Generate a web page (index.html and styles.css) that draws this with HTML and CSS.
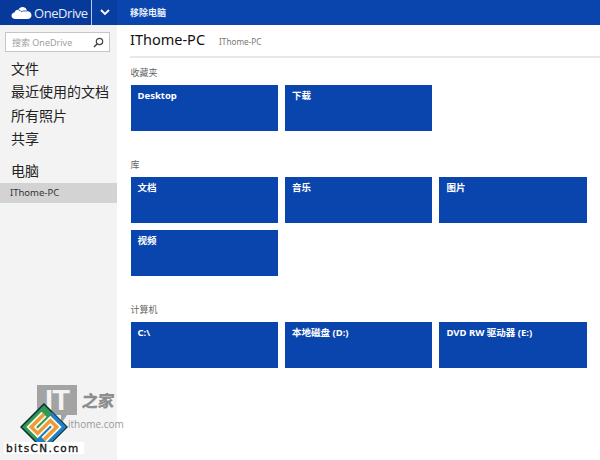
FILE: index.html
```html
<!DOCTYPE html>
<html lang="zh-CN">
<head>
<meta charset="utf-8">
<title>OneDrive</title>
<link rel="stylesheet" href="styles.css">
</head>
<body>
<header class="topbar">
  <div class="brand">
    <svg class="cloud" width="21" height="13" viewBox="0 0 21 13"><path fill="#fff" d="M4.500 13C2 13 .5 11.500 .5 9.700c0-1.700 1.300-3 3-3.200C3.900 4.700 5.500 3.500 7.300 3.700 8.400 1.700 10.200.8 12 1c2.200.3 3.800 2 4.100 4 2.600.2 4.400 2 4.400 4.200 0 2.200-1.700 3.800-4 3.800z"/><path fill="none" stroke="#07399a" stroke-width=".8" d="M7.300 3.700c1.300.3 2.300 1 2.900 2 1.300-.8 3.500-.9 5.900-.7"/></svg>
    <span class="brand-name">OneDrive</span>
  </div>
  <div class="chevron-box">
    <svg width="10" height="7" viewBox="0 0 10 7"><path d="M1 1l4 4 4-4" fill="none" stroke="#fff" stroke-width="1.800"/></svg>
  </div>
  <div class="top-action">移除电脑</div>
</header>
<div class="shell">
  <aside class="sidebar">
    <div class="search">
      <span class="search-text">搜索 OneDrive</span>
      <svg width="11" height="11" viewBox="0 0 11 11"><circle cx="6.500" cy="4.500" r="3.200" fill="none" stroke="#444" stroke-width="1.200"/><path d="M4.200 6.800L1 10" stroke="#444" stroke-width="1.500"/></svg>
    </div>
    <nav class="nav">
      <a>文件</a>
      <a>最近使用的文档</a>
      <a>所有照片</a>
      <a>共享</a>
    </nav>
    <div class="nav-head">电脑</div>
    <div class="nav-current">IThome-PC</div>
  </aside>
  <main class="content">
    <div class="title-row">
      <h1>IThome-PC</h1>
      <span class="subtitle">IThome-PC</span>
    </div>
    <section class="group first">
      <h2>收藏夹</h2>
      <div class="tiles">
        <div class="tile">Desktop</div>
        <div class="tile">下载</div>
      </div>
    </section>
    <section class="group">
      <h2>库</h2>
      <div class="tiles">
        <div class="tile">文档</div>
        <div class="tile">音乐</div>
        <div class="tile">图片</div>
        <div class="tile">视频</div>
      </div>
    </section>
    <section class="group">
      <h2>计算机</h2>
      <div class="tiles">
        <div class="tile">C:\</div>
        <div class="tile">本地磁盘 (D:)</div>
        <div class="tile">DVD RW 驱动器 (E:)</div>
      </div>
    </section>
  </main>
</div>
<div class="mark-it">
  <div class="mark-top"><span class="mark-block">IT</span><span class="mark-cn">之家</span></div>
  <span class="mark-url">ithome.com</span>
</div>
<div class="mark-bits">
  <svg width="48" height="48" viewBox="0 0 48 48">
    <path fill="#2f9a52" stroke="#0e2a33" stroke-width="1.500" d="M24 1l23 23-23 23L1 24z"/>
    <path fill="#1f7fc4" d="M32 9l14.500 15L24 46.500 15 37z"/>
    <g transform="rotate(-45 24 24)" fill="none" stroke-linejoin="miter">
      <path d="M33 15H15V24H33V33H15" stroke="#fbf8ea" stroke-width="7"/>
      <path d="M33 15H15V24H33V33H15" stroke="#ee9a35" stroke-width="3.500"/>
    </g>
  </svg>
  <span class="bits-text">bitsCN.com</span>
</div>
</body>
</html>
```
FILE: styles.css
```css
* { box-sizing: border-box; }
html, body { margin: 0; height: 100%; }
body {
  position: relative;
  width: 600px;
  height: 460px;
  overflow: hidden;
  background: #fff;
  font-family: "Noto Sans", "Noto Sans CJK SC", sans-serif;
  color: #222;
}
.topbar {
  display: flex;
  align-items: center;
  height: 25px;
  background: #0a45ae;
  color: #fff;
}
.brand {
  display: flex;
  flex: none;
  align-items: center;
  width: 92px;
  height: 25px;
  padding-left: 11px;
  background: #07399a;
  border-right: 1px solid #b9cbeb;
  background-clip: padding-box;
}
.cloud { flex: none; margin-right: 2px; }
.brand-name {
  font-family: "Open Sans", sans-serif;
  font-size: 13px;
  font-weight: 400;
  letter-spacing: -0.450px;
  color: #e4ecf8;
  white-space: nowrap;
}
.chevron-box {
  display: flex;
  flex: none;
  justify-content: center;
  align-items: center;
  width: 25px;
  height: 25px;
  background: #083e9f;
}
.top-action { margin-left: 13px; font-size: 9px; font-weight: 700; color: #e8effa; }
.shell { display: flex; height: 435px; }
.sidebar { width: 117px; flex: none; background: #f3f3f3; padding-top: 7px; }
.search {
  display: flex;
  align-items: center;
  justify-content: space-between;
  width: 105px;
  height: 20px;
  margin-left: 5px;
  padding: 0 5px 0 6px;
  background: #fff;
  border: 1px solid #c6c6c6;
}
.search-text { font-size: 9px; color: #a0a0a0; white-space: nowrap; }
.nav { display: flex; flex-direction: column; margin-top: 5px; padding-left: 11px; }
.nav a { height: 23.300px; line-height: 23px; font-size: 14px; color: #222; white-space: nowrap; }
.nav-head { margin: 9px 0 0 11px; height: 24px; line-height: 24px; font-size: 14px; }
.nav-current {
  height: 20px;
  padding-left: 10px;
  line-height: 20px;
  font-size: 9.500px;
  background: #d3d3d3;
  color: #333;
}
.content { flex: 1; padding: 3px 0 0 13.500px; }
.title-row {
  display: flex;
  align-items: baseline;
  height: 30px;
  margin-left: -0.500px;
  border-bottom: 2px solid #e8e8e8;
}
h1 { margin: 0; font-size: 14.500px; font-weight: 400; line-height: 23px; color: #111; }
.subtitle { margin-left: 14px; font-size: 8.200px; color: #777; }
.group { margin-top: 27px; }
.group.first { margin-top: 8px; }
h2 { margin: 0; font-size: 9px; font-weight: 400; line-height: 14px; color: #666; }
.tiles {
  display: grid;
  grid-template-columns: repeat(3, 147.300px);
  column-gap: 7.200px;
  row-gap: 7px;
  margin-top: 5px;
}
.tile {
  height: 46px;
  padding: 5px 7px;
  background: #0a45ae;
  color: #fff;
  font-size: 9.500px;
  font-weight: 700;
  line-height: 12px;
}
.mark-it {
  position: absolute;
  left: 37px;
  top: 385px;
  display: flex;
  flex-direction: column;
  color: #9a9a9a;
}
.mark-top { display: flex; align-items: center; gap: 5px; }
.mark-block {
  position: relative;
  width: 40px;
  height: 30px;
  background: #a3a3a3;
  color: #f3f3f3;
  font: 700 29px/30px "Liberation Sans", sans-serif;
  letter-spacing: -1px;
  text-align: center;
}
.mark-block::after {
  content: "";
  position: absolute;
  right: 10px;
  top: 30px;
  border-top: 9px solid #a3a3a3;
  border-right: 6px solid transparent;
}
.mark-cn {
  font-family: "Noto Sans CJK SC", sans-serif;
  font-size: 16.500px;
  font-weight: 900;
  letter-spacing: -0.500px;
  line-height: 26px;
  color: #8d8d8d;
  transform: skewX(-6deg);
}
.mark-url { margin: 3px 0 0 31px; font-family: "Open Sans", sans-serif; font-size: 10px; line-height: 13px; color: #999; white-space: nowrap; }
.mark-bits {
  position: absolute;
  left: 4px;
  top: 403px;
  width: 80px;
  display: flex;
  flex-direction: column;
  align-items: center;
}
.bits-text {
  width: 80px;
  margin-top: -9px;
  padding-left: 2px;
  font: 400 10.500px/12px "DejaVu Sans", sans-serif;
  letter-spacing: 1.350px;
  color: #111;
  background: #fff;
  white-space: nowrap;
  -webkit-text-stroke: 0.300px #111;
}
```
